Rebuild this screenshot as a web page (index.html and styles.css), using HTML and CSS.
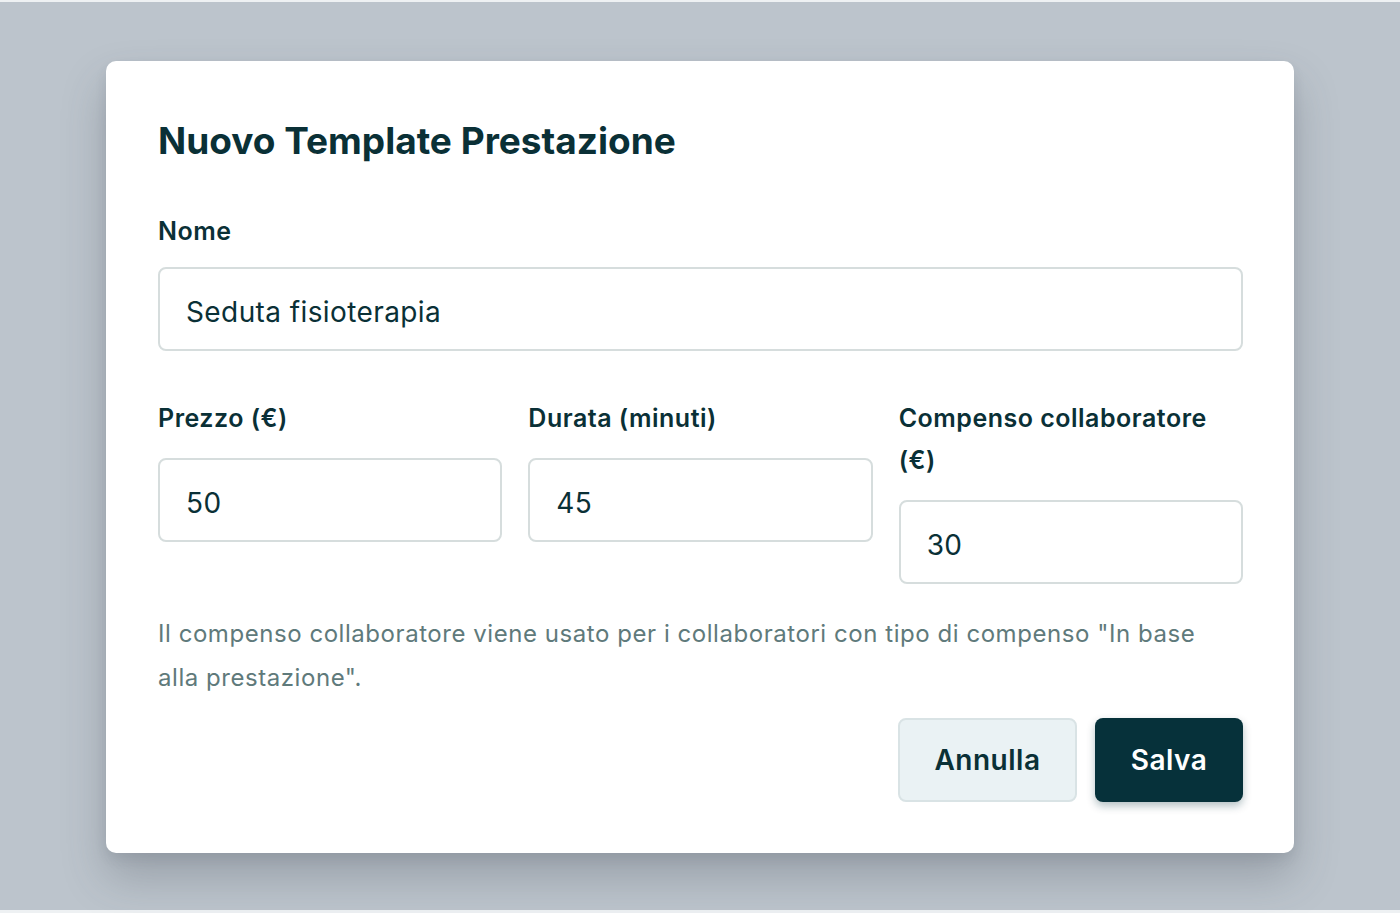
FILE: index.html
```html
<!DOCTYPE html>
<html lang="it">
<head>
<meta charset="utf-8">
<title>Nuovo Template Prestazione</title>
<link rel="stylesheet" href="styles.css">
</head>
<body>
<div class="overlay">
  <div class="modal">
    <h1 class="title">Nuovo Template Prestazione</h1>
    <div class="field">
      <label class="label">Nome</label>
      <div class="input">Seduta fisioterapia</div>
    </div>
    <div class="row">
      <div class="field">
        <label class="label">Prezzo (€)</label>
        <div class="input">50</div>
      </div>
      <div class="field">
        <label class="label">Durata (minuti)</label>
        <div class="input">45</div>
      </div>
      <div class="field">
        <label class="label">Compenso collaboratore (€)</label>
        <div class="input">30</div>
      </div>
    </div>
    <p class="hint">Il compenso collaboratore viene usato per i collaboratori con tipo di compenso "In base alla prestazione".</p>
    <div class="actions">
      <button class="btn btn-secondary">Annulla</button>
      <button class="btn btn-primary">Salva</button>
    </div>
  </div>
</div>
</body>
</html>
```
FILE: styles.css
```css
* { box-sizing: border-box; }
html, body { margin: 0; padding: 0; }
body {
  background: #eef1f3;
  font-family: Inter, "Noto Sans", sans-serif;
  color: #0a3036;
}
.overlay {
  margin: 2px 0 3px;
  height: 908px;
  background: #bcc4cc;
  padding-top: 59px;
  display: flex;
  justify-content: center;
  align-items: flex-start;
}
.modal {
  width: 1188px;
  background: #ffffff;
  border-radius: 10px;
  padding: 54px 51px 51px 52px;
  box-shadow: 0 24px 44px rgba(60, 70, 80, 0.28), 0 6px 12px rgba(60, 70, 80, 0.1);
}
.title {
  margin: 0 0 43px;
  font-size: 37px;
  line-height: 52px;
  font-weight: 700;
  letter-spacing: 0;
  color: #0a3036;
}
.field { display: flex; flex-direction: column; }
.label {
  font-size: 25px;
  line-height: 43px;
  font-weight: 600;
  letter-spacing: 0.5px;
  color: #0a3036;
  margin-bottom: 14px;
}
.input {
  height: 84px;
  border: 2px solid #d6dddd;
  border-radius: 8px;
  padding: 5px 26px 0;
  display: flex;
  align-items: center;
  font-size: 28px;
  letter-spacing: 0.4px;
  color: #0a3036;
}
.row {
  margin-top: 46px;
  display: grid;
  grid-template-columns: repeat(3, 1fr);
  column-gap: 26px;
  align-items: start;
}
.row .label {
  line-height: 42px;
  margin-bottom: 19px;
}
.hint {
  margin: 28px 0 18px;
  font-size: 24px;
  line-height: 44px;
  color: #5f7a7b;
  letter-spacing: 0.55px;
}
.actions {
  display: flex;
  justify-content: flex-end;
  gap: 18px;
}
.btn {
  height: 84px;
  border-radius: 8px;
  font-family: inherit;
  font-size: 28px;
  font-weight: 600;
  letter-spacing: 0.5px;
  padding: 0;
  cursor: pointer;
}
.btn-secondary {
  width: 179px;
  background: #eaf2f4;
  border: 2px solid #d9e3e5;
  color: #0a3036;
}
.btn-primary {
  width: 148px;
  background: #06313a;
  border: none;
  color: #ffffff;
  box-shadow: 0 4px 8px rgba(6, 49, 58, 0.3);
}
```
